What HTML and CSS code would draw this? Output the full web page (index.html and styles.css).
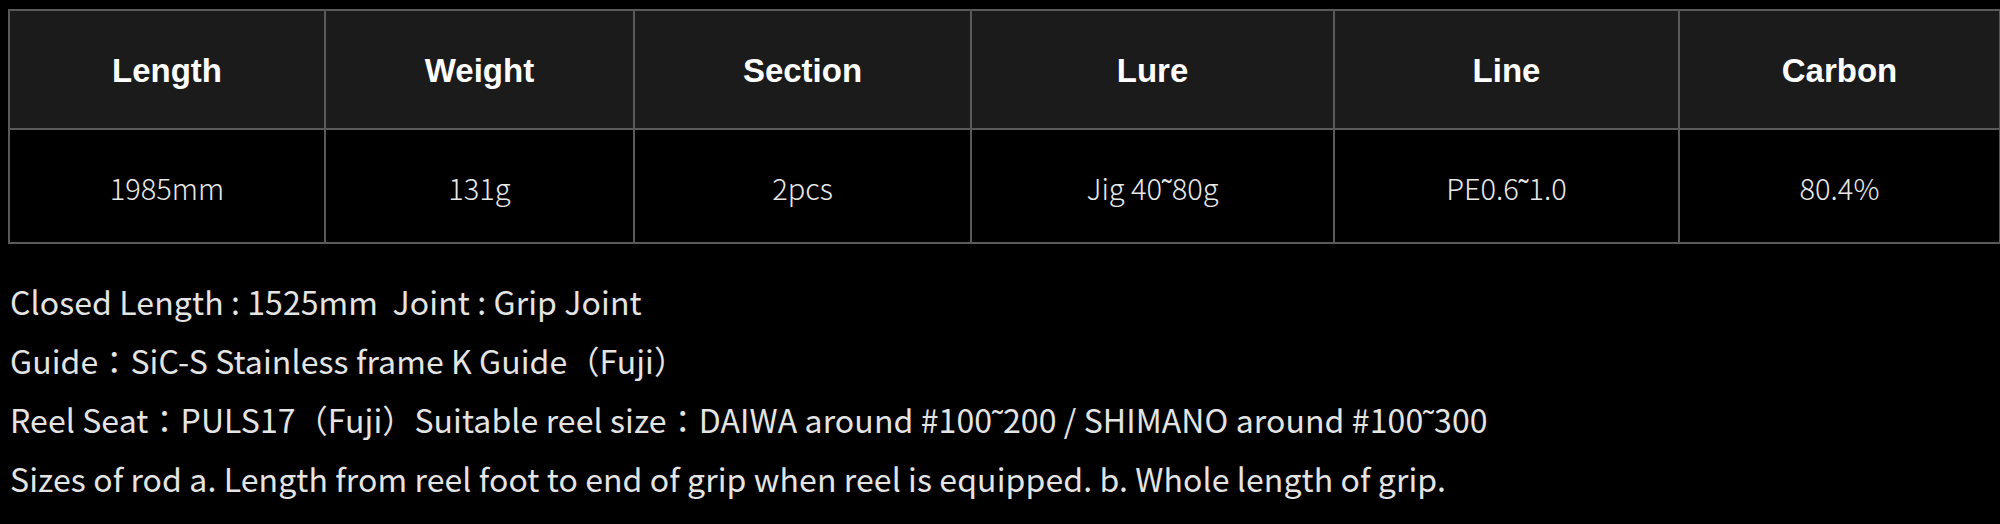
FILE: index.html
```html
<!DOCTYPE html>
<html lang="ja">
<head>
<meta charset="utf-8">
<title>Spec</title>
<link rel="stylesheet" href="styles.css">
</head>
<body class="page">
<div class="wrap">
  <table class="spec">
    <colgroup>
      <col class="c1"><col class="c2"><col class="c3"><col class="c4"><col class="c5"><col class="c6">
    </colgroup>
    <thead>
      <tr class="head-row">
        <th>Length</th><th>Weight</th><th>Section</th><th>Lure</th><th>Line</th><th>Carbon</th>
      </tr>
    </thead>
    <tbody>
      <tr class="body-row">
        <td>1985mm</td><td>131g</td><td>2pcs</td><td>Jig 40˜80g</td><td>PE0.6˜1.0</td><td>80.4%</td>
      </tr>
    </tbody>
  </table>
  <div class="notes">
    <p class="note">Closed Length : 1525mm&nbsp;&nbsp;Joint : Grip Joint</p>
    <p class="note">Guide：SiC-S Stainless frame K Guide（Fuji）</p>
    <p class="note">Reel Seat：PULS17（Fuji）Suitable reel size：DAIWA around #100˜200 / SHIMANO around #100˜300</p>
    <p class="note">Sizes of rod a. Length from reel foot to end of grip when reel is equipped. b. Whole length of grip.</p>
  </div>
</div>
</body>
</html>
```
FILE: styles.css
```css
html, body {
  margin: 0;
  padding: 0;
  background: #000;
}
.page {
  width: 2000px;
  height: 524px;
  overflow: hidden;
}
.wrap {
  padding: 9px 1px 0 8px;
}
.spec {
  border-collapse: collapse;
  width: 1991px;
  table-layout: fixed;
  border: 2px solid #666;
}
.c1 { width: 316px; }
.c2 { width: 309px; }
.c3 { width: 337px; }
.c4 { width: 363px; }
.c5 { width: 345px; }
.c6 { width: 321px; }
.spec th, .spec td {
  border: 2px solid #5a5a5a;
  text-align: center;
  padding: 0;
}
.head-row th {
  height: 119px;
  padding-top: 3px;
  box-sizing: border-box;
  background: #1b1b1b;
  color: #fff;
  font-family: "Liberation Sans", Arial, sans-serif;
  font-weight: 700;
  font-size: 33px;
}
.body-row td {
  height: 114px;
  padding-top: 1px;
  box-sizing: border-box;
  background: #000;
  color: #e8e8e8;
  font-family: "Noto Sans CJK JP", sans-serif;
  font-weight: 300;
  font-size: 29px;
}
.notes {
  padding: 28px 0 0 2px;
}
.note {
  margin: 0;
  line-height: 59px;
  color: #e4e4e4;
  font-family: "Noto Sans CJK JP", sans-serif;
  font-size: 32px;
  font-weight: 400;
  letter-spacing: 0.1px;
  white-space: nowrap;
}
```
